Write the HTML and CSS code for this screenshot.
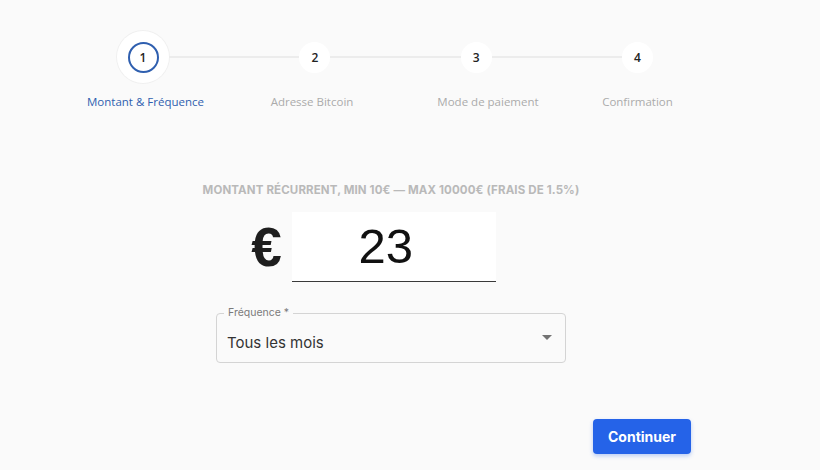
FILE: index.html
```html
<!DOCTYPE html>
<html lang="fr">
<head>
<meta charset="utf-8">
<title>Montant &amp; Fréquence</title>
<link rel="stylesheet" href="styles.css">
</head>
<body>
<div class="page">
  <div class="stepper">
    <div class="circles">
      <div class="step-active"><span class="ring">1</span></div>
      <div class="connector"></div>
      <div class="step">2</div>
      <div class="connector"></div>
      <div class="step">3</div>
      <div class="connector"></div>
      <div class="step">4</div>
    </div>
    <div class="labels">
      <div class="label active">Montant &amp; Fréquence</div>
      <div class="label">Adresse Bitcoin</div>
      <div class="label">Mode de paiement</div>
      <div class="label">Confirmation</div>
    </div>
  </div>

  <div class="form">
    <div class="hint">Montant récurrent, min 10€ — max 10000€ (frais de 1.5%)</div>
    <div class="amount">
      <span class="currency">€</span>
      <div class="amount-input">23</div>
    </div>
    <div class="select">
      <span class="select-label">Fréquence *</span>
      <span class="select-value">Tous les mois</span>
      <span class="arrow"></span>
    </div>
  </div>

  <div class="actions">
    <button class="btn" type="button">Continuer</button>
  </div>
</div>
</body>
</html>
```

FILE: styles.css
```css
html, body {
  margin: 0;
  padding: 0;
  background: #fafafa;
}
body {
  font-family: "Open Sans", "Noto Sans", sans-serif;
  width: 820px;
  height: 470px;
  overflow: hidden;
}
.page {
  padding-top: 31px;
}
.stepper {
  display: flex;
  flex-direction: column;
}
.circles {
  display: flex;
  align-items: center;
  margin-left: 117px;
  width: 536px;
  height: 52px;
}
.step-active {
  width: 52px;
  height: 52px;
  border-radius: 50%;
  background: #ffffff;
  box-shadow: 0 0 0 1px #f0f0f0;
  display: flex;
  align-items: center;
  justify-content: center;
  flex: none;
}
.ring {
  width: 27px;
  height: 27px;
  border: 2px solid #2f5faf;
  border-radius: 50%;
  display: flex;
  align-items: center;
  justify-content: center;
  font-size: 12px;
  font-weight: 600;
  color: #222;
}
.step {
  width: 31px;
  height: 31px;
  border-radius: 50%;
  background: #ffffff;
  display: flex;
  align-items: center;
  justify-content: center;
  font-size: 12px;
  font-weight: 600;
  color: #222;
  flex: none;
}
.connector {
  flex: 1;
  height: 2px;
  background: #ececec;
}
.labels {
  display: grid;
  grid-template-columns: 167px 166px 186px 113px;
  margin-left: 62px;
  margin-top: 11px;
}
.label {
  text-align: center;
  font-size: 11.5px;
  line-height: 16px;
  color: #ababab;
  white-space: nowrap;
}
.label.active {
  color: #2f5faf;
}

.form {
  width: 400px;
  margin-left: 191px;
  margin-top: 72px;
  display: flex;
  flex-direction: column;
  align-items: center;
}
.hint {
  font-family: Inter, "Noto Sans", sans-serif;
  font-weight: 700;
  font-size: 11.5px;
  line-height: 16px;
  color: #b9b9b9;
  text-transform: uppercase;
  white-space: nowrap;
  letter-spacing: 0.13px;
}
.amount {
  display: flex;
  align-items: center;
  gap: 10px;
  margin-top: 14px;
  padding-right: 35px;
}
.currency {
  font-family: "Liberation Sans", Arial, sans-serif;
  font-weight: 700;
  font-size: 55px;
  line-height: 1;
  color: #1e1e1e;
}
.amount-input {
  width: 204px;
  height: 70px;
  box-sizing: border-box;
  background: #ffffff;
  border-bottom: 1px solid #3a3a3a;
  font-family: "Liberation Sans", Arial, sans-serif;
  font-size: 49px;
  line-height: 69px;
  color: #111;
  text-align: center;
  padding-right: 16px;
}
.select {
  position: relative;
  margin-top: 31px;
  width: 350px;
  height: 50px;
  box-sizing: border-box;
  border: 1px solid #d4d4d4;
  border-radius: 4px;
  display: flex;
  align-items: center;
  padding: 8px 10px 0 10px;
}
.select-label {
  position: absolute;
  left: 7px;
  top: -8px;
  padding: 0 4px;
  background: #fafafa;
  font-family: Inter, "Noto Sans", sans-serif;
  font-size: 10.5px;
  line-height: 14px;
  color: #7a7a7a;
}
.select-value {
  font-family: Inter, "Noto Sans", sans-serif;
  font-size: 15px;
  color: #333;
  flex: 1;
}
.arrow {
  width: 0;
  height: 0;
  border-left: 5px solid transparent;
  border-right: 5px solid transparent;
  border-top: 5px solid #737373;
  margin-right: 3px;
  margin-top: -10px;
}
.actions {
  display: flex;
  justify-content: flex-end;
  padding-right: 129px;
  margin-top: 56px;
}
.btn {
  width: 98px;
  height: 35px;
  border: none;
  border-radius: 4px;
  background: #2563e8;
  color: #ffffff;
  font-family: Inter, "Noto Sans", sans-serif;
  font-weight: 700;
  font-size: 14px;
  box-shadow: 0 2px 4px rgba(37, 99, 232, 0.3);
  cursor: pointer;
}
```
